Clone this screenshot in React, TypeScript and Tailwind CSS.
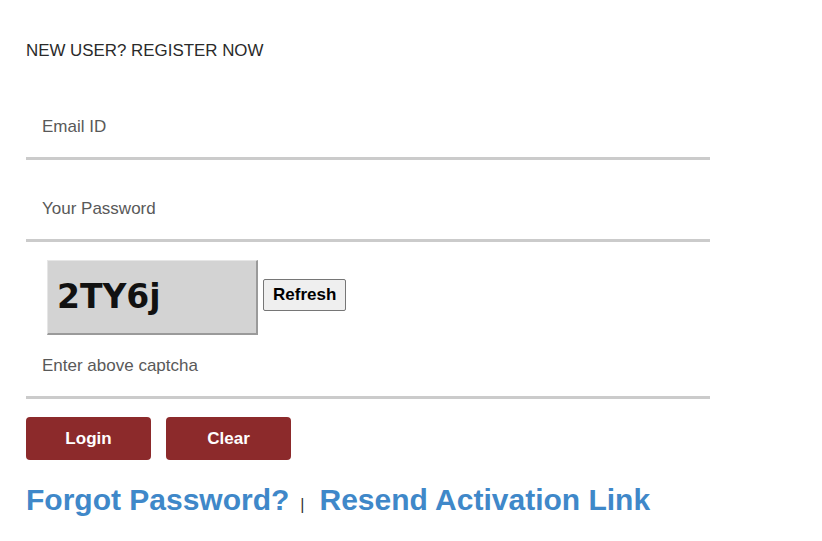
import { useState } from 'react';

const fieldClass =
  'block h-[64px] w-full border-0 border-b-[3px] border-[#cbcbcb] bg-white px-4 text-[17px] text-[#444] placeholder:text-[#595959] focus:outline-none';

export default function App() {
  const [email, setEmail] = useState('');
  const [password, setPassword] = useState('');
  const [captcha, setCaptcha] = useState('');

  function handleClear() {
    setEmail('');
    setPassword('');
    setCaptcha('');
  }

  return (
    <div className="min-h-[541px] bg-white pl-[26px] pt-[41px] font-['Liberation_Sans',Arial,sans-serif]">
      <h2 className="text-[16.9px] leading-[19px] text-[#2a2a2a]">NEW USER? REGISTER NOW</h2>

      <form className="mt-[36px] w-[684px]" onSubmit={(e) => e.preventDefault()}>
        <input
          className={fieldClass}
          placeholder="Email ID"
          value={email}
          onChange={(e) => setEmail(e.target.value)}
        />
        <input
          type="password"
          className={`${fieldClass} mt-[18px]`}
          placeholder="Your Password"
          value={password}
          onChange={(e) => setPassword(e.target.value)}
        />

        <div className="mt-[18px] flex items-start pl-[21px]">
          <div className="flex h-[75px] w-[211px] items-center border-t border-l border-t-[#e6e6e6] border-l-[#e6e6e6] border-r-2 border-b-2 border-r-[#9a9a9a] border-b-[#9a9a9a] bg-[#d3d3d3] pl-[9px] font-['DejaVu_Sans',Verdana,sans-serif] text-[33px] font-bold text-[#111]">
            2TY6j
          </div>
          <button
            type="button"
            className="ml-[5px] mt-[19px] h-[32px] rounded-[2px] border border-[#767676] bg-[#efefef] px-[9px] text-[17px] font-bold text-black"
          >
            Refresh
          </button>
        </div>

        <input
          className={fieldClass}
          placeholder="Enter above captcha"
          value={captcha}
          onChange={(e) => setCaptcha(e.target.value)}
        />

        <div className="mt-[18px] flex gap-[15px]">
          <button
            type="submit"
            className="h-[43px] w-[125px] rounded-[4px] bg-[#8c2a2b] text-[17px] font-bold text-white"
          >
            Login
          </button>
          <button
            type="button"
            className="h-[43px] w-[125px] rounded-[4px] bg-[#8c2a2b] text-[17px] font-bold text-white"
            onClick={handleClear}
          >
            Clear
          </button>
        </div>
      </form>

      <div className="mt-[23px] flex items-baseline">
        <a href="#" className="text-[30px] font-bold leading-[34px] text-[#3f88c9]">
          Forgot Password?
        </a>
        <span className="ml-[11px] mr-[15px] text-[16px] text-[#333]">|</span>
        <a href="#" className="text-[30px] font-bold leading-[34px] text-[#3f88c9]">
          Resend Activation Link
        </a>
      </div>
    </div>
  );
}
